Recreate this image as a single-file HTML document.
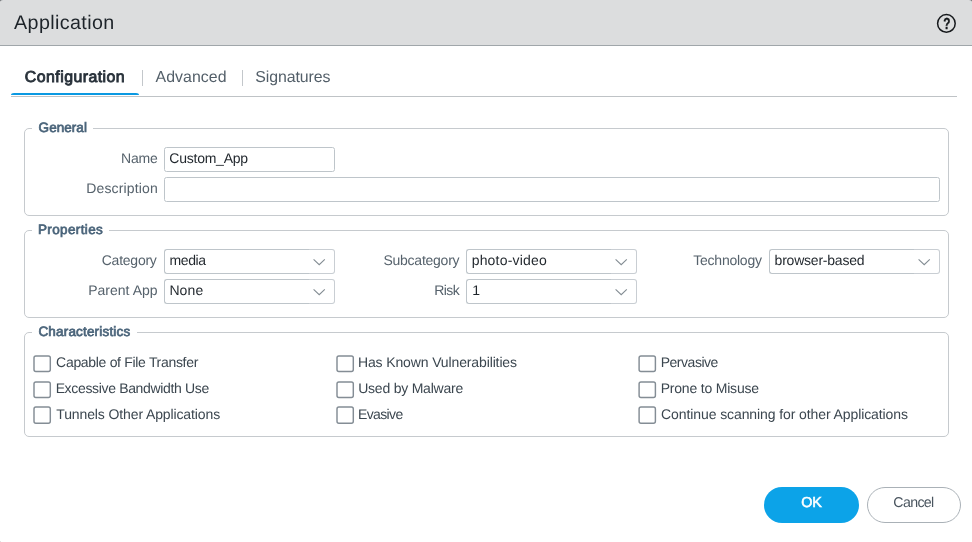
<!DOCTYPE html>
<html lang="en">
<head>
<meta charset="utf-8">
<title>Application</title>
<style>
*{box-sizing:border-box;margin:0;padding:0}
html,body{width:972px;height:542px;overflow:hidden;background:#fff}
body{position:relative;text-rendering:geometricPrecision;font-family:"Liberation Sans",sans-serif;color:#2a323a}
.a{position:absolute;white-space:nowrap}
#tx{position:absolute;left:0;top:0;width:972px;height:542px;will-change:transform}
.cn{position:absolute;top:0;width:3px;height:2px;background:#66686b}
#hdr{position:absolute;left:0;top:0;width:972px;height:46px;background:#dcddde;border-bottom:1px solid #a0a6aa;border-radius:3px 3px 0 0 / 2px 2px 0 0}
#help{position:absolute;left:935px;top:12px;width:23px;height:23px;will-change:transform}
.t-title{color:#1d2329}
.t-tab{color:#535f69}
.t-tab.on{-webkit-text-stroke-width:.85px;color:#28313a}
.t-lg{-webkit-text-stroke-width:.7px;color:#4a647a}
.t-lb{color:#56626c}
.t-v{color:#1f252b}
.t-cl{color:#3b464f}
.t-ok{color:#fff;-webkit-text-stroke-width:.55px}
.t-cancel{color:#4a555f}
.sep{position:absolute;top:70px;width:1px;height:16px;background:#c3c7cb}
#tabline{position:absolute;left:11px;top:96px;width:946px;height:1px;background:#bfc3c6}
#tabon{position:absolute;left:11px;top:93px;width:128px;height:2px;background:#0a99e2;border-radius:3px 3px 0 0 / 2px 2px 0 0}
.fs{position:absolute;left:24px;width:925px;border:1px solid #c6cace;border-radius:5px}
.gap{position:absolute;top:-1px;left:7px;height:1px;background:#fff}
.in{position:absolute;height:25px;border:1px solid #bec5ca;border-radius:2.5px;background:#fff}
.cb{width:146px;border-right:0;border-radius:3px 0 0 3px}
.tr{position:absolute;width:26px;height:25px;border:1px solid #c9ced3;border-left:0;border-radius:0 3px 3px 0;background:#fff}
.tr svg{position:absolute;left:3px;top:8px}
.btn{position:absolute;top:487px;height:36px;border-radius:18px}
#okb{left:764px;width:95px;background:#0ca3e8}
#cancelb{left:867px;width:94px;background:#fff;border:1px solid #aab1b7}
</style>
</head>
<body>
<div class="cn" style="left:0"></div><div style="position:absolute;left:0;top:541px;width:1px;height:1px;background:#e2e2e2"></div><div class="cn" style="right:0"></div>
<div id="hdr"></div>
<svg id="help" viewBox="0 0 23 23"><circle cx="11.4" cy="11.4" r="8.8" fill="none" stroke="#16191c" stroke-width="1.5"/><text x="11.8" y="17.2" text-anchor="middle" transform="translate(11.8 0) scale(.74 1) translate(-11.8 0)" font-family="Liberation Sans, sans-serif" font-weight="bold" font-size="16" fill="#16191c" stroke="#16191c" stroke-width=".35">?</text></svg>

<div class="sep" style="left:142px"></div>
<div class="sep" style="left:242px"></div>
<div id="tabline"></div><div id="tabon"></div>

<div class="fs" style="top:128px;height:88px"><div class="gap" style="width:61px"></div></div>
<div class="in" style="left:164px;top:147px;width:171px"></div>
<div class="in" style="left:164px;top:177px;width:776px"></div>

<div class="fs" style="top:230px;height:88px"><div class="gap" style="width:77px"></div></div>
<div class="in cb" style="left:164px;top:249px"></div><div class="tr" style="left:309px;top:249px"><svg width="14" height="8" viewBox="0 0 14 8"><path d="M1.6 1.3 L7.2 6.7 L12.8 1.3" fill="none" stroke="#838c93" stroke-width="1.1"/></svg></div>
<div class="in cb" style="left:164px;top:279px"></div><div class="tr" style="left:309px;top:279px"><svg width="14" height="8" viewBox="0 0 14 8"><path d="M1.6 1.3 L7.2 6.7 L12.8 1.3" fill="none" stroke="#838c93" stroke-width="1.1"/></svg></div>
<div class="in cb" style="left:466px;top:249px"></div><div class="tr" style="left:611px;top:249px"><svg width="14" height="8" viewBox="0 0 14 8"><path d="M1.6 1.3 L7.2 6.7 L12.8 1.3" fill="none" stroke="#838c93" stroke-width="1.1"/></svg></div>
<div class="in cb" style="left:466px;top:279px"></div><div class="tr" style="left:611px;top:279px"><svg width="14" height="8" viewBox="0 0 14 8"><path d="M1.6 1.3 L7.2 6.7 L12.8 1.3" fill="none" stroke="#838c93" stroke-width="1.1"/></svg></div>
<div class="in cb" style="left:769px;top:249px"></div><div class="tr" style="left:914px;top:249px"><svg width="14" height="8" viewBox="0 0 14 8"><path d="M1.6 1.3 L7.2 6.7 L12.8 1.3" fill="none" stroke="#838c93" stroke-width="1.1"/></svg></div>

<div class="fs" style="top:332px;height:105px"><div class="gap" style="width:105px"></div></div>

<svg id="cks" width="972" height="542" viewBox="0 0 972 542" style="position:absolute;left:0;top:0" fill="#fff" stroke="#848d95" stroke-width="1.45"><rect x="34.0" y="355.9" width="16.3" height="15.6" rx="1.9"/><rect x="34.0" y="381.9" width="16.3" height="15.6" rx="1.9"/><rect x="34.0" y="407.0" width="16.3" height="16.2" rx="1.9"/><rect x="337.0" y="355.9" width="16.3" height="15.6" rx="1.9"/><rect x="337.0" y="381.9" width="16.3" height="15.6" rx="1.9"/><rect x="337.0" y="407.0" width="16.3" height="16.2" rx="1.9"/><rect x="639.1" y="355.9" width="16.3" height="15.6" rx="1.9"/><rect x="639.1" y="381.9" width="16.3" height="15.6" rx="1.9"/><rect x="639.1" y="407.0" width="16.3" height="16.2" rx="1.9"/></svg>
<div class="btn" id="okb"></div>
<div class="btn" id="cancelb"></div>

<div id="tx">
<span class="a t-title" id="title" style="left:14.02px;top:10px;font-size:19.7px;line-height:26px;letter-spacing:0.397px">Application</span>
<span class="a t-tab on" id="tab1" style="left:24.87px;top:67px;font-size:15.9px;line-height:21px;letter-spacing:0.437px">Configuration</span>
<span class="a t-tab" id="tab2" style="left:155.54px;top:67px;font-size:15.9px;line-height:21px;letter-spacing:0.056px">Advanced</span>
<span class="a t-tab" id="tab3" style="left:255.20px;top:67px;font-size:15.9px;line-height:21px;letter-spacing:-0.079px">Signatures</span>
<span class="a t-lg" id="lg1" style="left:38.60px;top:119px;font-size:13.5px;line-height:18px;letter-spacing:0.043px">General</span>
<span class="a t-lg" id="lg2" style="left:38.00px;top:221px;font-size:13.5px;line-height:18px;letter-spacing:0.359px">Properties</span>
<span class="a t-lg" id="lg3" style="left:38.44px;top:323px;font-size:13.5px;line-height:18px;letter-spacing:0.176px">Characteristics</span>
<span class="a t-lb" id="lb1" style="left:121.00px;top:149px;font-size:14px;line-height:18px;letter-spacing:-0.218px">Name</span>
<span class="a t-lb" id="lb2" style="left:86.19px;top:179px;font-size:14px;line-height:18px;letter-spacing:0.155px">Description</span>
<span class="a t-v" id="v1" style="left:169.32px;top:149px;font-size:14px;line-height:18px;letter-spacing:-0.239px">Custom_App</span>
<span class="a t-lb" id="lb3" style="left:101.76px;top:251px;font-size:14px;line-height:18px;letter-spacing:-0.244px">Category</span>
<span class="a t-lb" id="lb4" style="left:88.19px;top:281px;font-size:14px;line-height:18px;letter-spacing:0.015px">Parent App</span>
<span class="a t-v" id="v2" style="left:169.57px;top:251px;font-size:14px;line-height:18px;letter-spacing:-0.428px">media</span>
<span class="a t-v" id="v3" style="left:169.42px;top:281px;font-size:14px;line-height:18px;letter-spacing:0.108px">None</span>
<span class="a t-lb" id="lb5" style="left:383.45px;top:251px;font-size:14px;line-height:18px;letter-spacing:-0.250px">Subcategory</span>
<span class="a t-lb" id="lb6" style="left:434.22px;top:281px;font-size:14px;line-height:18px;letter-spacing:-0.575px">Risk</span>
<span class="a t-v" id="v4" style="left:471.68px;top:251px;font-size:14px;line-height:18px;letter-spacing:0.188px">photo-video</span>
<span class="a t-v" id="v5" style="left:472.36px;top:281px;font-size:14px;line-height:18px">1</span>
<span class="a t-lb" id="lb7" style="left:693.25px;top:251px;font-size:14px;line-height:18px;letter-spacing:-0.235px">Technology</span>
<span class="a t-v" id="v6" style="left:774.60px;top:251px;font-size:14px;line-height:18px;letter-spacing:-0.221px">browser-based</span>
<span class="a t-cl" id="c1" style="left:56.11px;top:353px;font-size:14px;line-height:18px;letter-spacing:-0.313px">Capable of File Transfer</span>
<span class="a t-cl" id="c2" style="left:55.64px;top:379px;font-size:14px;line-height:18px;letter-spacing:-0.340px">Excessive Bandwidth Use</span>
<span class="a t-cl" id="c3" style="left:56.25px;top:405px;font-size:14px;line-height:18px;letter-spacing:-0.116px">Tunnels Other Applications</span>
<span class="a t-cl" id="c4" style="left:357.96px;top:353px;font-size:14px;line-height:18px;letter-spacing:-0.127px">Has Known Vulnerabilities</span>
<span class="a t-cl" id="c5" style="left:358.16px;top:379px;font-size:14px;line-height:18px;letter-spacing:-0.217px">Used by Malware</span>
<span class="a t-cl" id="c6" style="left:357.96px;top:405px;font-size:14px;line-height:18px;letter-spacing:-0.629px">Evasive</span>
<span class="a t-cl" id="c7" style="left:660.64px;top:353px;font-size:14px;line-height:18px;letter-spacing:-0.462px">Pervasive</span>
<span class="a t-cl" id="c8" style="left:660.64px;top:379px;font-size:14px;line-height:18px;letter-spacing:-0.191px">Prone to Misuse</span>
<span class="a t-cl" id="c9" style="left:661.11px;top:405px;font-size:14px;line-height:18px;letter-spacing:-0.097px">Continue scanning for other Applications</span>
<span class="a t-ok" id="ok" style="left:801.16px;top:494px;font-size:14.4px;line-height:19px;letter-spacing:-0.018px">OK</span>
<span class="a t-cancel" id="cancel" style="left:893.29px;top:494px;font-size:14.2px;line-height:18px;letter-spacing:-0.637px">Cancel</span>
</div>
</body>
</html>
